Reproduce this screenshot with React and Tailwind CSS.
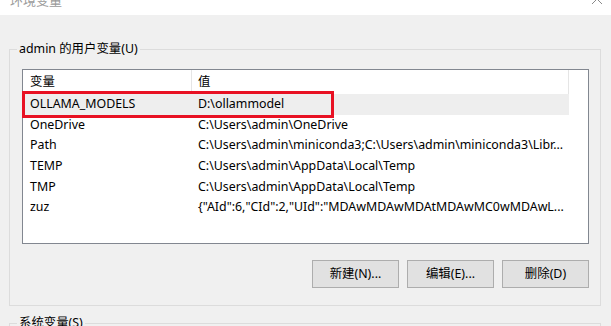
export default function App() {
  const rows = [
    ["OLLAMA_MODELS", "D:\\ollammodel"],
    ["OneDrive", "C:\\Users\\admin\\OneDrive"],
    ["Path", "C:\\Users\\admin\\miniconda3;C:\\Users\\admin\\miniconda3\\Libr..."],
    ["TEMP", "C:\\Users\\admin\\AppData\\Local\\Temp"],
    ["TMP", "C:\\Users\\admin\\AppData\\Local\\Temp"],
    ["zuz", '{"AId":6,"CId":2,"UId":"MDAwMDAwMDAtMDAwMC0wMDAwL...'],
  ];

  return (
    <div
      className="w-[611px] h-[326px] overflow-hidden bg-[#f0f0f0] text-[12.4px] text-black"
      style={{ fontFamily: '"Noto Sans", "Noto Sans CJK SC", sans-serif' }}
    >
      {/* title bar, cut off at the top */}
      <div className="relative h-[15px] overflow-hidden bg-white">
        <div className="-mt-[9px] pl-[10px] text-[13px] leading-[18px] text-[#9a9a9a]">环境变量</div>
        <svg className="absolute right-[9px] -top-[6px]" width="10" height="10" viewBox="0 0 10 10">
          <path d="M0 0L10 10M10 0L0 10" stroke="#8a8a8a" strokeWidth="1" />
        </svg>
      </div>

      {/* user variables group */}
      <div className="relative ml-[9px] mt-[34px] w-[592px] h-[257px] border border-[#dcdcdc] pt-[19px] pl-[12px] pr-[10px]">
        <div className="absolute left-[7px] -top-[9px] bg-[#f0f0f0] px-[2px] leading-[16px]">admin 的用户变量(U)</div>

        <div className="relative w-[567px] h-[175px] border border-[#828790] bg-white">
          <div className="flex h-[24px] w-[546px] items-center">
            <div className="w-[169px] h-full flex items-center pl-[7px] border-r border-[#e5e5e5]">变量</div>
            <div className="flex-1 h-full flex items-center pl-[6px] border-r border-[#e5e5e5]">值</div>
          </div>
          {rows.map(([name, value], i) => (
            <div
              key={name}
              className={`flex w-[546px] h-[20.7px] items-center ${i === 0 ? "bg-[#eeeeee]" : ""}`}
            >
              <div className="w-[169px] pl-[7px] whitespace-nowrap">{name}</div>
              <div className="flex-1 pl-[6px] whitespace-nowrap overflow-hidden">{value}</div>
            </div>
          ))}

          {/* red highlight */}
          <div className="absolute -left-[1px] top-[21px] w-[312px] h-[27px] border-[3px] border-[#e81123]" />
        </div>

        <div className="mt-[16px] flex justify-end gap-[8px] w-[567px]">
          <button className="w-[87px] h-[28px] border border-[#adadad] bg-[#e1e1e1]">新建(N)...</button>
          <button className="w-[87px] h-[28px] border border-[#adadad] bg-[#e1e1e1]">编辑(E)...</button>
          <button className="w-[87px] h-[28px] border border-[#adadad] bg-[#e1e1e1]">删除(D)</button>
        </div>
      </div>

      {/* system variables group */}
      <div className="relative ml-[9px] mt-[17px] w-[592px] h-[40px] border border-[#dcdcdc]">
        <div className="absolute left-[7px] -top-[9px] bg-[#f0f0f0] px-[2px] leading-[16px]">系统变量(S)</div>
      </div>
    </div>
  );
}
